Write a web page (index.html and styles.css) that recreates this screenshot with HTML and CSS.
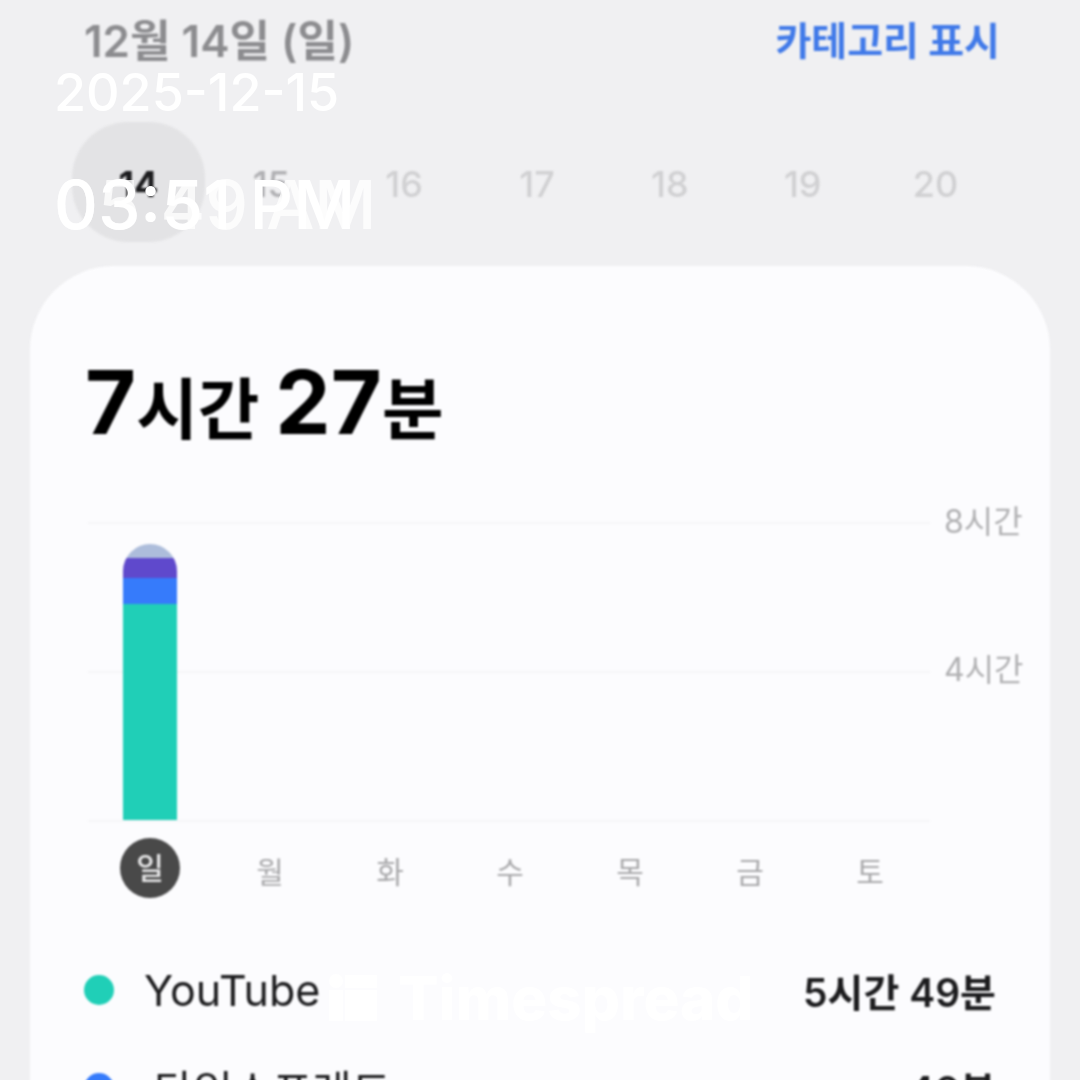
FILE: index.html
```html
<!DOCTYPE html>
<html lang="ko">
<head>
<meta charset="utf-8">
<meta name="viewport" content="width=device-width, initial-scale=1">
<title>스크린 타임</title>
<link rel="stylesheet" href="styles.css">
</head>
<body>
<div class="screen">
  <div class="report">
    <header class="top">
      <h1 class="date">12월 14일 (일)</h1>
      <a class="category" href="#categories">카테고리 표시</a>
    </header>
    <nav class="days" aria-label="날짜">
      <button class="day day-on" type="button">14</button>
      <button class="day day-past" type="button">15</button>
      <button class="day" type="button">16</button>
      <button class="day" type="button">17</button>
      <button class="day" type="button">18</button>
      <button class="day" type="button">19</button>
      <button class="day" type="button">20</button>
    </nav>
    <main class="card">
      <h2 class="total"><span class="num">7</span>시간 <span class="num">27</span>분</h2>
      <section class="chart" aria-label="요일별 사용 시간">
        <div class="plot">
          <div class="bar">
            <span class="seg other"></span>
            <span class="seg purple"></span>
            <span class="seg blue"></span>
            <span class="seg teal"></span>
          </div>
        </div>
        <div class="scale"><span>8시간</span><span>4시간</span></div>
      </section>
      <div class="week">
        <span class="wd"><b class="wd-on">일</b></span>
        <span class="wd">월</span>
        <span class="wd">화</span>
        <span class="wd">수</span>
        <span class="wd">목</span>
        <span class="wd">금</span>
        <span class="wd">토</span>
      </div>
      <ul class="apps" id="categories">
        <li class="app"><span class="dot teal"></span><span class="name">YouTube</span><span class="time">5시간 49분</span></li>
        <li class="app"><span class="dot blue"></span><span class="name name-ko">타임스프레드</span><span class="time">40분</span></li>
      </ul>
    </main>
  </div>
  <div class="stamp">
    <div class="stamp-date">2025-12-15</div>
    <div class="stamp-time"><span class="faint">05:49 AM</span><span>03:51 PM</span></div>
  </div>
  <div class="brand">
    <svg class="logo" viewBox="0 0 50 48" aria-hidden="true"><circle cx="8" cy="7" r="7"/><path d="M17 1h32v13H17zM1 16h14v31H1zM17 16h32v31H17z"/></svg>
    <span>Timespread</span>
  </div>
</div>
</body>
</html>
```
FILE: styles.css
```css
* { box-sizing: border-box; }
html { background: #f0f0f2; }
body {
  margin: 0;
  font-family: "Inter", "Noto Sans CJK KR", sans-serif;
  color: #1c1c1e;
}
.screen {
  position: relative;
  height: 100vh;
  overflow: hidden;
}
/* the report is slightly out of focus behind the stamps */
.report { filter: blur(1px); }
.top {
  display: flex;
  justify-content: space-between;
  align-items: center;
  height: 76px;
  padding: 0 80px 0 84px;
}
.date { margin: 0; font-size: 44px; font-weight: 600; color: #8c8c8f; }
.category { font-size: 39px; font-weight: 700; color: #4079e8; text-decoration: none; }
.days {
  display: grid;
  grid-template-columns: repeat(7, 1fr);
  margin-top: 46px;
  padding: 0 78px 0 72px;
}
.day {
  height: 120px;
  border: 0;
  padding: 4px 0 0;
  border-radius: 56px;
  background: none;
  font: 500 36px "Inter", sans-serif;
  color: #d0d0d2;
}
.day-past { color: #b0b0b3; }
.day-on { background: #e3e3e5; color: #1c1c1e; font-weight: 700; }
.card {
  margin: 24px 30px 0;
  padding: 88px 28px 0 54px;
  border-radius: 84px 84px 0 0;
  background: #fcfcfe;
}
.total { margin: 0; padding-left: 1px; font-size: 67px; line-height: 96px; font-weight: 700; color: #000; }
.num { font-size: 88px; }
.chart { display: flex; gap: 14px; margin-top: 64px; }
.plot {
  flex: 1;
  display: flex;
  align-items: flex-end;
  height: 300px;
  margin-left: 4px;
  padding-left: 35px;
  border-bottom: 2px solid #f6f6f8;
  background: linear-gradient(#f5f5f7 2px, transparent 2px) 0 0 / 100% 149px;
}
.bar { width: 54px; height: 276px; display: flex; flex-direction: column; border-radius: 27px 27px 0 0; overflow: hidden; }
.seg { display: block; }
.seg.other { height: 14px; }
.seg.purple { height: 20px; }
.seg.blue { height: 26px; }
.seg.teal { flex: 1; }
.other { background: #adbddb; }
.purple { background: #5f49cc; }
.blue { background: #367bfb; }
.teal { background: #20cfb7; }
.scale { display: flex; flex-direction: column; width: 78px; margin-top: -24px; font-size: 32px; color: #b0b0b2; line-height: 48px; gap: 100px; white-space: nowrap; }
.week { display: grid; grid-template-columns: repeat(7, 120px); margin-top: 16px; padding-left: 6px; }
.wd { display: flex; align-items: center; justify-content: center; height: 60px; padding-top: 4px; font-size: 30px; color: #a8a8aa; }
.wd:first-child { padding-top: 0; }
.wd-on { width: 60px; line-height: 60px; border-radius: 50%; background: #494949; color: #e8e8e9; text-align: center; font-weight: 500; }
.apps { list-style: none; margin: 43px 0 0; padding: 0; }
.app { display: flex; align-items: center; height: 98px; padding-right: 26px; }
.dot { width: 30px; height: 30px; border-radius: 50%; }
.name { margin-left: 30px; font-size: 43px; }
.name-ko { margin-left: 40px; }
.time { margin-left: auto; font-size: 39px; font-weight: 600; }
.stamp { position: absolute; left: 54px; top: 60px; color: #fff; font-weight: 500; }
.stamp-date { font-size: 52px; line-height: 66px; }
.stamp-time { display: grid; margin-top: 40px; font-size: 68px; line-height: 76px; white-space: nowrap; }
.stamp-time span { grid-area: 1 / 1; }
.faint { opacity: 0.8; }
.brand { position: absolute; left: 328px; top: 968px; display: flex; align-items: center; gap: 20px; color: #fff; font-size: 60px; font-weight: 800; line-height: 60px; }
.logo { width: 50px; height: 48px; fill: #fff; }
```
